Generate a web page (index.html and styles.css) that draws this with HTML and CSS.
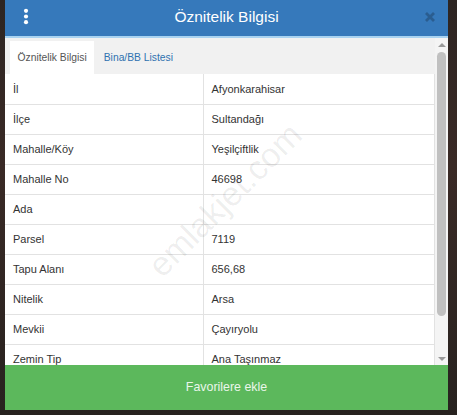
FILE: index.html
```html
<!DOCTYPE html>
<html lang="tr">
  <head>
    <meta charset="UTF-8" />
    <meta name="viewport" content="width=device-width, initial-scale=1.0" />
    <title>Öznitelik Bilgisi</title>
    <link rel="stylesheet" href="styles.css">
  </head>
  <body>
    <div class="modal">
      <div class="modal_header">
        <div class="menu_icon">
          <svg viewBox="0 0 6 18" xmlns="http://www.w3.org/2000/svg">
            <circle cx="3" cy="3" r="2.2" />
            <circle cx="3" cy="9" r="2.2" />
            <circle cx="3" cy="15" r="2.2" />
          </svg>
        </div>
        <h1>Öznitelik Bilgisi</h1>
        <div class="close_icon">
          <svg viewBox="0 0 12 12" xmlns="http://www.w3.org/2000/svg">
            <path d="M2 2L10 10M10 2L2 10" />
          </svg>
        </div>
      </div>

      <div class="modal_body">
        <div class="content">
          <ul class="tabs">
            <li class="tab active">Öznitelik Bilgisi</li>
            <li class="tab">Bina/BB Listesi</li>
          </ul>
          <table class="info_table">
            <tr><td>İl</td><td>Afyonkarahisar</td></tr>
            <tr><td>İlçe</td><td>Sultandağı</td></tr>
            <tr><td>Mahalle/Köy</td><td>Yeşilçiftlik</td></tr>
            <tr><td>Mahalle No</td><td>46698</td></tr>
            <tr><td>Ada</td><td></td></tr>
            <tr><td>Parsel</td><td>7119</td></tr>
            <tr><td>Tapu Alanı</td><td>656,68</td></tr>
            <tr><td>Nitelik</td><td>Arsa</td></tr>
            <tr><td>Mevkii</td><td>Çayıryolu</td></tr>
            <tr><td>Zemin Tip</td><td>Ana Taşınmaz</td></tr>
          </table>
          <div class="watermark">emlakjet.com</div>
        </div>
        <div class="scrollbar">
          <div class="arrow up"></div>
          <div class="track"><div class="thumb"></div></div>
          <div class="arrow down"></div>
        </div>
      </div>

      <div class="modal_footer">Favorilere ekle</div>
    </div>
  </body>
</html>
```

FILE: styles.css
```css
* {
  box-sizing: border-box;
  padding: 0;
  margin: 0;
}
body {
  width: 457px;
  height: 415px;
  overflow: hidden;
  background: linear-gradient(180deg, #2d2522 0%, #3a2a26 40%, #27221f 100%);
  font-family: "Liberation Sans", Arial, sans-serif;
}
.modal {
  width: 443px;
  height: 410px;
  margin-left: 5px;
  display: flex;
  flex-direction: column;
  background: #f1f1f1;
}
.modal_header {
  height: 38px;
  flex-shrink: 0;
  display: flex;
  align-items: center;
  background: #3679bb;
  border-bottom: 2px solid #a9d3f1;
  color: #fff;
  padding: 0 12px 0 18px;
}
.modal_header h1 {
  flex: 1;
  text-align: center;
  font-size: 15.5px;
  font-weight: 400;
  margin-top: -2px;
}
.menu_icon svg {
  width: 6px;
  height: 17px;
  fill: #fff;
  display: block;
  margin-top: -4px;
}
.close_icon svg {
  width: 12px;
  height: 12px;
  display: block;
  stroke: #2a5d90;
  stroke-width: 2.8;
  margin-top: -2px;
}
.modal_body {
  flex: 1;
  display: flex;
  overflow: hidden;
}
.content {
  position: relative;
  width: 430px;
  overflow: hidden;
}
.tabs {
  display: flex;
  list-style: none;
  padding: 3px 0 0 5px;
  height: 36px;
}
.tab {
  height: 33px;
  line-height: 34px;
  padding: 0 7.5px;
  font-size: 10.3px;
  color: #2f72b0;
}
.tab.active {
  background: #fff;
  color: #555;
  margin-right: 2px;
}
.info_table {
  width: 430px;
  border-collapse: collapse;
  background: #fff;
  font-size: 11px;
  color: #333;
}
.info_table td {
  height: 30px;
  padding: 0 8px;
  border-bottom: 1px solid #e2e2e2;
  border-right: 1px solid #e2e2e2;
}
.info_table td:first-child {
  width: 198px;
}
.watermark {
  position: absolute;
  left: 220px;
  top: 162px;
  font-size: 34px;
  color: rgba(0, 0, 0, 0.07);
  transform: translate(-50%, -50%) rotate(-45deg);
  white-space: nowrap;
}
.scrollbar {
  width: 13px;
  display: flex;
  flex-direction: column;
  background: #f4f4f4;
}
.arrow {
  height: 13px;
  display: flex;
  align-items: center;
  justify-content: center;
}
.arrow.up::before {
  content: "";
  border: 4px solid transparent;
  border-bottom: 4px solid #999;
  border-top: 0;
}
.arrow.down::before {
  content: "";
  border: 4px solid transparent;
  border-top: 4px solid #999;
  border-bottom: 0;
}
.track {
  flex: 1;
  padding: 1px 2px;
}
.thumb {
  height: 264px;
  background: #c0c0c0;
  border-radius: 5px;
}
.modal_footer {
  height: 45px;
  flex-shrink: 0;
  background: #5cb85c;
  color: #eaf6ea;
  font-size: 12.4px;
  text-align: center;
  line-height: 44px;
}
```
